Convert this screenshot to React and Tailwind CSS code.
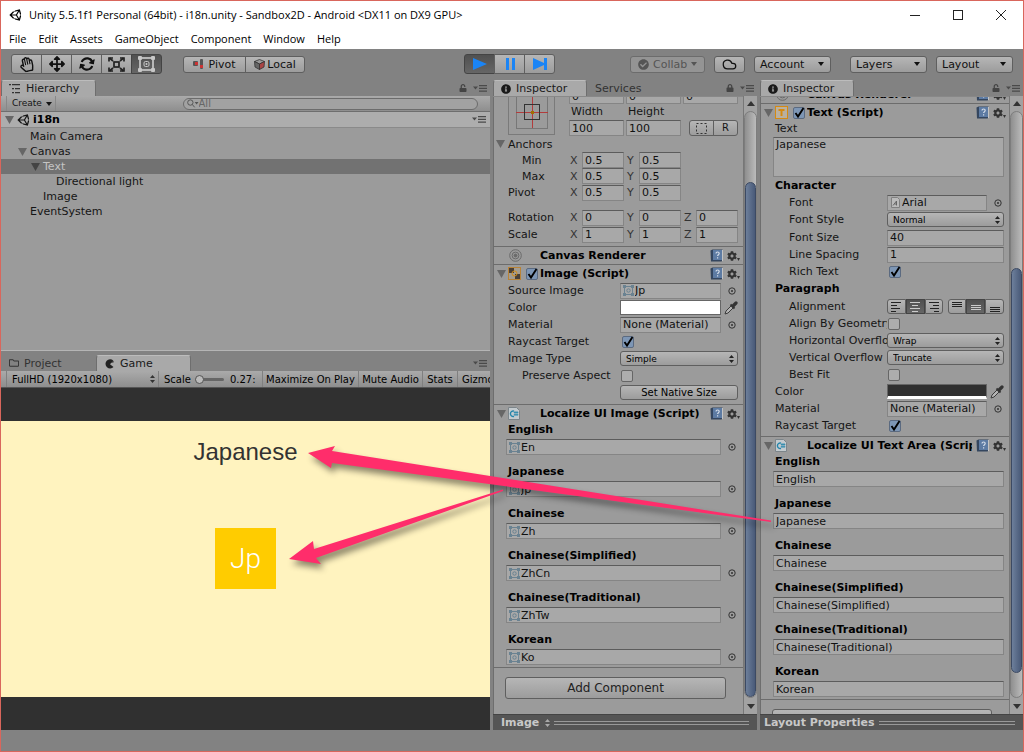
import React, { useId, useState } from 'react';
import {
  FaArrowsAlt,
  FaCheckCircle,
  FaCog,
  FaInfoCircle,
  FaLock,
  FaRegFolder,
  FaRegHandPaper,
  FaSyncAlt,
  FaUnity,
  FaUnlock,
} from 'react-icons/fa';
import { Cloud } from 'lucide-react';

const MENU = ['File', 'Edit', 'Assets', 'GameObject', 'Component', 'Window', 'Help'];

const TREE = [
  { name: 'Main Camera', pad: 'pl-[17px]' },
  { name: 'Canvas', pad: 'pl-[17px]', open: true },
  { name: 'Text', pad: 'pl-[30px]', open: true, selected: true },
  { name: 'Directional light', pad: 'pl-[43px]' },
  { name: 'Image', pad: 'pl-[30px]' },
  { name: 'EventSystem', pad: 'pl-[17px]' },
];

const SPRITES = [
  ['English', 'En'],
  ['Japanese', 'Jp'],
  ['Chainese', 'Zh'],
  ['Chainese(Simplified)', 'ZhCn'],
  ['Chainese(Traditional)', 'ZhTw'],
  ['Korean', 'Ko'],
];

const TEXTS = ['English', 'Japanese', 'Chainese', 'Chainese(Simplified)', 'Chainese(Traditional)', 'Korean'];

const BTN = 'border border-[#5f5f5f] bg-linear-to-b from-[#b6b6b6] to-[#9c9c9c]';
const BTN_ON = 'border border-[#444] bg-linear-to-b from-[#505050] to-[#666]';
const BOX = 'h-4 min-w-0 border border-[#858585] border-t-[#5c5c5c] bg-[#a8a8a8] text-[11px] text-[#111] outline-none';

/* ---------- icons ---------- */

function Foldout({ dark }) {
  return (
    <svg viewBox="0 0 9 8" className={`w-[9px] h-2 shrink-0 ${dark ? 'text-[#444]' : 'text-[#666]'}`}>
      <path d="M0 0h9L4.500 8z" fill="currentColor" />
    </svg>
  );
}

function Caret() {
  return (
    <svg viewBox="0 0 6 4" className="w-[6px] h-1 shrink-0">
      <path d="M0 0h6L3 4z" fill="currentColor" />
    </svg>
  );
}

function UpDown({ className = '' }) {
  return (
    <svg viewBox="0 0 5 8" className={`w-[5px] h-2 shrink-0 ${className}`}>
      <path d="M0 3l2.500-3L5 3zM0 5h5L2.500 8z" fill="currentColor" />
    </svg>
  );
}

function PanelMenu() {
  return (
    <svg viewBox="0 0 14 7" className="w-[14px] h-[7px] shrink-0" fill="#4a4a4a">
      <path d="M0 1.500h5L2.500 4.500zM6 0h8v1.300H6zM6 2.700h8V4H6zM6 5.400h8v1.300H6z" />
    </svg>
  );
}

function ListIcon() {
  return (
    <svg viewBox="0 0 12 10" className="w-3 h-[10px]" fill="#333">
      <path d="M0 0h2v1.300H0zM3 0h8v1.300H3zM3 4h2v1.300H3zM6 4h5v1.300H6zM3 8h2v1.300H3zM6 8h5v1.300H6z" />
    </svg>
  );
}

function ScaleIcon() {
  return (
    <svg viewBox="0 0 17 15" className="w-[17px] h-[15px]" fill="none" stroke="#222" strokeWidth="1.700">
      <rect x="6" y="5" width="5" height="5" />
      <path d="M5 4L1.500 1M12 4l3.500-3M5 11l-3.500 3M12 11l3.500 3" />
      <path d="M1 4.500V1h4M12 1h4v3.500M1 10.500V14h4M12 14h4v-3.500" />
    </svg>
  );
}

function RectIcon() {
  return (
    <svg viewBox="0 0 17 16" className="w-[17px] h-4" fill="none" stroke="#c8c8c8">
      <rect x="2" y="2" width="13" height="12" strokeWidth="1.700" />
      <rect x="6" y="5.500" width="5" height="5" rx="1.500" />
      <g fill="#c8c8c8" stroke="none">
        <circle cx="8.500" cy="8" r="1" />
        <rect width="4" height="4" rx="1" />
        <rect x="13" width="4" height="4" rx="1" />
        <rect y="12" width="4" height="4" rx="1" />
        <rect x="13" y="12" width="4" height="4" rx="1" />
      </g>
    </svg>
  );
}

function PivotIcon() {
  return (
    <svg viewBox="0 0 11 10" className="w-[11px] h-[10px]">
      <rect y="2" width="5" height="5" rx="1" fill="#555" />
      <rect x="2" y="3" width="3" height="3" fill="#c33" />
      <rect x="7" y="0" width="3" height="10" rx="1" fill="#555" />
      <rect x="7" y="6" width="3" height="3" fill="#c33" />
    </svg>
  );
}

function CubeIcon() {
  return (
    <svg viewBox="0 0 11 11" className="w-[11px] h-[11px]" stroke="#333" strokeWidth="0.800">
      <path d="M5.500 0.500L10.500 2.500 5.500 5 0.500 2.500z" fill="#999" />
      <path d="M0.500 2.500L5.500 5v5.500L1 8z" fill="#666" />
      <path d="M10.500 2.500L5.500 5v5.500L10 8z" fill="#a44" />
    </svg>
  );
}

function PacIcon() {
  return (
    <svg viewBox="0 0 10 10" className="w-[10px] h-[10px]">
      <path d="M8.200 1.400A4.600 4.600 0 1 0 8.500 7.900L5 5.200z" fill="#222" />
      <path d="M5 3.600h3.500V1.800z" fill="#222" />
    </svg>
  );
}

function SpriteIcon() {
  return (
    <svg viewBox="0 0 11 11" className="w-[11px] h-[11px] shrink-0" fill="none" stroke="#6a8291">
      <rect x="1.500" y="1.500" width="8" height="8" />
      <circle cx="5.500" cy="5.500" r="1.700" />
      <path d="M0 0h3v3H0zM8 0h3v3H8zM0 8h3v3H0zM8 8h3v3H8z" fill="#6a8291" stroke="none" />
    </svg>
  );
}

function FontIcon() {
  return (
    <svg viewBox="0 0 9 11" className="w-[9px] h-[11px] mx-px shrink-0">
      <path d="M.5.5h6l2 2v8h-8z" fill="#bbb" stroke="#808080" />
      <path d="M2 8.500L5.500 4v4.500M3.500 7h2" fill="none" stroke="#666" />
    </svg>
  );
}

function DropperIcon() {
  return (
    <svg viewBox="0 0 14 14" className="w-[14px] h-[14px]">
      <path d="M1 13l1-3 6-6 2 2-6 6z" fill="#b4b4b4" stroke="#3c3c3c" />
      <path d="M6.500 3.500l4 4" stroke="#333" strokeWidth="1.800" />
      <path d="M9 5l3-3" stroke="#333" strokeWidth="3.200" strokeLinecap="round" />
    </svg>
  );
}

function HelpIcon() {
  return (
    <svg viewBox="0 0 13 13" className="w-[13px] h-[13px]">
      <path d="M.5 1.500L2.500.5h10v11l-1 1H1z" fill="#34465f" />
      <rect x="3" y="1" width="9" height="10" fill="#5d7ba3" />
      <path d="M12.500 1v11" stroke="#c4c4c4" />
      <path d="M6 4.500c0-2 3.200-2 3.200 0 0 1.200-1.600 1.200-1.600 2.600M7.600 8.200v1.300" fill="none" stroke="#d4dce8" strokeWidth="1.200" />
    </svg>
  );
}

function CanvasIcon() {
  return (
    <svg viewBox="0 0 15 13" className="w-[15px] h-[13px]" fill="none" stroke="#6a6a6a">
      <circle cx="7.500" cy="6.500" r="5.800" />
      <circle cx="7.500" cy="6.500" r="3.400" />
      <circle cx="7.500" cy="6.500" r="1.500" fill="#6a6a6a" />
    </svg>
  );
}

function ImageIcon() {
  return (
    <svg viewBox="0 0 13 13" className="w-[13px] h-[13px]">
      <rect width="13" height="13" fill="#a39c90" />
      <path d="M0 0h6v6H0zM7 7h6v6H7z" fill="#4a4038" />
      <rect x=".5" y=".5" width="12" height="12" fill="none" stroke="#b98336" />
      <circle cx="6.500" cy="6.500" r="2.500" fill="none" stroke="#d78d14" />
    </svg>
  );
}

function TextIcon() {
  return (
    <svg viewBox="0 0 13 13" className="w-[13px] h-[13px]">
      <rect x=".5" y=".5" width="12" height="12" fill="#b9b0a0" stroke="#d58a12" />
      <path d="M3.500 4h6M6.500 4v6" stroke="#d58a12" strokeWidth="2" />
    </svg>
  );
}

function ScriptIcon() {
  return (
    <svg viewBox="0 0 12 13" className="w-3 h-[13px]">
      <path d="M.5.5h8l3 3v9H.5z" fill="#c3cace" stroke="#7c858a" />
      <path d="M6 4.200A2.700 2.700 0 1 0 6 9.300" fill="none" stroke="#2385ab" strokeWidth="1.400" />
      <path d="M7 4v5M9 4v5M5.800 5.500h4.500M5.800 7.700h4.500" stroke="#2385ab" strokeWidth=".8" />
    </svg>
  );
}

function AnchorIcon() {
  return (
    <svg viewBox="0 0 32 42" className="w-8 h-[42px]" fill="none">
      <rect x=".5" y="-3" width="31" height="42.500" stroke="#777" />
      <path d="M0 23.500h32M16.500 0v39" stroke="#b23c3c" />
      <rect x="8.500" y="15.500" width="15" height="15" stroke="#333" />
      <rect x="15" y="22" width="3" height="3" fill="#a07000" />
    </svg>
  );
}

function AlignIcon({ d }) {
  return (
    <svg viewBox="0 0 10 10" className="w-[10px] h-[10px]">
      <path d={d} stroke="currentColor" fill="none" />
    </svg>
  );
}

/* ---------- controls ---------- */

function Picker({ name }) {
  return (
    <button aria-label={`Select ${name}`} className="w-[17px] flex justify-end pr-[2px] shrink-0">
      <svg viewBox="0 0 8 8" className="w-2 h-2">
        <circle cx="4" cy="4" r="3.200" fill="none" stroke="#333" />
        <circle cx="4" cy="4" r="1" fill="#333" />
      </svg>
    </button>
  );
}

function ObjectBox({ id, name, value, icon }) {
  return (
    <div className="flex flex-1 items-center min-w-0">
      <div className={`${BOX} flex flex-1 items-center gap-px pl-[2px]`}>
        {icon}
        <input id={id} readOnly defaultValue={value} className="flex-1 min-w-0 h-[14px] bg-transparent outline-none" />
      </div>
      <Picker name={name} />
    </div>
  );
}

function Check({ id, on, label }) {
  const [checked, setChecked] = useState(!!on);
  return (
    <span className="relative w-3 h-3 shrink-0">
      <input
        id={id}
        type="checkbox"
        aria-label={label}
        checked={checked}
        onChange={(e) => setChecked(e.target.checked)}
        className="block appearance-none w-3 h-3 rounded-xs border border-[#666] bg-[#adadad] checked:bg-[#7d96b5] checked:border-[#5b6a80]"
      />
      {checked && (
        <svg viewBox="0 0 12 12" className="absolute inset-0 w-3 h-3 pointer-events-none">
          <path d="M2.500 6l2.500 3.500L10.500 1" fill="none" stroke="#000" strokeWidth="1.900" />
        </svg>
      )}
    </span>
  );
}

function Drop({ id, options }) {
  return (
    <div className="relative flex-1 min-w-0 flex items-center">
      <select id={id} className={`${BTN} appearance-none w-full h-[15px] rounded-[3px] pl-[5px] text-[9px] text-black outline-none`}>
        {options.map((opt) => (
          <option key={opt}>{opt}</option>
        ))}
      </select>
      <UpDown className="absolute right-1 pointer-events-none text-[#222]" />
    </div>
  );
}

function ColorBox({ id, dark }) {
  return (
    <>
      <button
        id={id}
        className={`flex-1 h-[15px] border border-[#666] ${dark ? 'bg-[#303030] border-b-[3px] border-b-white' : 'bg-white'}`}
      />
      <button aria-label="Pick color" className="w-[17px] flex justify-end">
        <DropperIcon />
      </button>
    </>
  );
}

function Row({ label, indent, children }) {
  const id = useId();
  return (
    <div className="h-[17px] flex items-center pl-[15px] pr-[5px]">
      <label htmlFor={id} className={`w-[112px] shrink-0 overflow-hidden whitespace-nowrap ${indent ? 'pl-[14px]' : ''}`}>
        {label}
      </label>
      {children(id)}
    </div>
  );
}

function Vec({ label, indent, values, className = 'h-[17px]' }) {
  return (
    <div className={`flex items-center pl-[15px] pr-[5px] ${className}`}>
      <span className={`w-[61px] shrink-0 ${indent ? 'pl-[14px]' : ''}`}>{label}</span>
      <div className="flex-1 grid grid-cols-3 gap-[2px]">
        {values.map((v, i) => (
          <label key={i} className="flex items-center min-w-0">
            <span className="w-[13px] shrink-0 pl-px text-[#333]">{'XYZ'[i]}</span>
            <input defaultValue={v} className={`${BOX} w-full pl-[2px]`} />
          </label>
        ))}
      </div>
    </div>
  );
}

function Header({ icon, title, fold = true, check }) {
  return (
    <div className="h-[18px] border-t border-[#6c6c6c] flex items-center pl-1 pr-[3px] shrink-0">
      <span className="w-[11px]">{fold && <Foldout />}</span>
      <span className="w-[18px] flex shrink-0">{icon}</span>
      <span className="w-[14px] flex shrink-0">{check && <Check on label={`${title} enabled`} />}</span>
      <h3 className="flex-1 min-w-0 overflow-hidden whitespace-nowrap font-bold text-black mr-1">{title}</h3>
      <button aria-label="Help" className="mr-1">
        <HelpIcon />
      </button>
      <button aria-label="Component menu" className="flex items-end text-[#333]">
        <FaCog size={10} />
        <svg viewBox="0 0 3 3" className="w-[3px] h-[3px]">
          <path d="M0 0h3L1.500 3z" fill="currentColor" />
        </svg>
      </button>
    </div>
  );
}

function Entry({ label, value, sprite }) {
  const id = useId();
  return (
    <div className="h-[42px] pl-[13px] pr-[5px]">
      <label htmlFor={id} className="block h-4 leading-4 pl-[2px] font-bold text-black">
        {label}
      </label>
      <div className="h-[17px] flex items-end">
        {sprite ? (
          <ObjectBox id={id} name={label} value={value} icon={<SpriteIcon />} />
        ) : (
          <input id={id} defaultValue={value} className={`${BOX} w-full pl-[2px]`} />
        )}
      </div>
    </div>
  );
}

function Tab({ icon, children, active, className = '' }) {
  return (
    <button
      role="tab"
      aria-selected={!!active}
      className={`h-4 flex items-center gap-[5px] text-[11px] text-[#1a1a1a] whitespace-nowrap ${
        active ? 'bg-[#a9a9a9] border border-b-0 border-[#6e6e6e] border-t-[#bcbcbc] rounded-t-[3px]' : 'text-[#333]'
      } ${className}`}
    >
      {icon}
      {children}
    </button>
  );
}

function Scrollbar({ thumb }) {
  return (
    <div className="w-[14px] shrink-0 flex flex-col items-center bg-[#a2a2a2] border-l border-[#777] text-[#333]">
      <div className="h-[15px] grid place-items-center">
        <svg viewBox="0 0 8 5" className="w-2 h-[5px]">
          <path d="M0 5h8L4 0z" fill="currentColor" />
        </svg>
      </div>
      <div className="flex-1 w-full rounded-full border border-[#7d7d7d] bg-linear-to-r from-[#8f8f8f] to-[#bbb] flex flex-col overflow-hidden">
        {thumb}
      </div>
      <div className="h-4 grid place-items-center">
        <svg viewBox="0 0 8 5" className="w-2 h-[5px]">
          <path d="M0 0h8L4 5z" fill="currentColor" />
        </svg>
      </div>
    </div>
  );
}

function Inspector({ width, services, locked, footer, footerMenu, thumb, children }) {
  return (
    <section className={`${width} shrink-0 flex flex-col min-h-0`}>
      <div className="h-4 flex items-center pr-[3px]">
        <Tab active icon={<FaInfoCircle size={10} />} className="w-[94px] pl-[7px]">
          Inspector
        </Tab>
        {services && <Tab className="pl-2">Services</Tab>}
        <span className="ml-auto mr-[6px] text-[#444]">{locked ? <FaLock size={8} /> : <FaUnlock size={8} />}</span>
        <PanelMenu />
      </div>
      <div className="flex-1 min-h-0 flex bg-[#9b9b9b] border-l border-[#6e6e6e]">
        <div className="flex-1 min-w-0 overflow-hidden border-t border-[#888] -ml-px">{children}</div>
        <Scrollbar thumb={thumb} />
      </div>
      <div className="h-4 shrink-0 flex items-center bg-[#555] border-t border-[#444] pr-2">
        <span className={`flex items-center gap-[6px] pr-1 font-bold text-[#c8c8c8] whitespace-nowrap ${footerMenu ? 'pl-2' : 'pl-1'}`}>
          {footer}
          {footerMenu && <UpDown className="text-[#aaa]" />}
        </span>
        <span className="flex-1 h-1 border-y border-[#999]" />
      </div>
    </section>
  );
}

function WindowButtons() {
  return (
    <div className="ml-auto flex items-center gap-[33px] pr-[17px] text-[#222]">
      <button aria-label="Minimize">
        <svg viewBox="0 0 10 10" className="w-[10px] h-[10px]">
          <path d="M0 5.500h10" stroke="currentColor" />
        </svg>
      </button>
      <button aria-label="Maximize">
        <svg viewBox="0 0 10 10" className="w-[10px] h-[10px]">
          <rect x=".5" y=".5" width="9" height="9" fill="none" stroke="currentColor" />
        </svg>
      </button>
      <button aria-label="Close">
        <svg viewBox="0 0 10 10" className="w-[10px] h-[10px]">
          <path d="M0 0l10 10M10 0L0 10" stroke="currentColor" />
        </svg>
      </button>
    </div>
  );
}

function ToolBar() {
  const tools = [
    ['Hand', <FaRegHandPaper size={15} className="-rotate-12" />],
    ['Move', <FaArrowsAlt size={16} />],
    ['Rotate', <FaSyncAlt size={14} className="rotate-12" />],
    ['Scale', <ScaleIcon />],
    ['Rect', <RectIcon />],
  ];
  const play = [
    ['Play', 'M0 1l14 6L0 13z'],
    ['Pause', 'M3 1h3v12H3zM9 1h3v12H9z'],
    ['Step', 'M0 1l11 5V1h3v12h-3V8L0 13z'],
  ];
  return (
    <div className="h-[31px] shrink-0 grid grid-cols-[1fr_auto_1fr] items-center px-[10px] pb-px text-[#111]">
      <div className="flex items-center">
        <div className="flex">
          {tools.map(([name, icon], i) => (
            <button
              key={name}
              aria-label={name}
              className={`w-[31px] h-5 -mr-px grid place-items-center first:rounded-l-[3px] last:rounded-r-[3px] ${i === 4 ? BTN_ON : BTN}`}
            >
              {icon}
            </button>
          ))}
        </div>
        <button className={`${BTN} ml-[22px] w-[63px] h-[17px] rounded-l-[3px] flex items-center justify-center gap-1 text-[11px]`}>
          <PivotIcon />
          Pivot
        </button>
        <button className={`${BTN} -ml-px w-[60px] h-[17px] rounded-r-[3px] flex items-center justify-center gap-[2px] text-[11px]`}>
          <CubeIcon />
          Local
        </button>
      </div>
      <div className="flex mr-[6px]">
        {play.map(([name, d], i) => (
          <button
            key={name}
            aria-label={name}
            className={`w-[31px] h-5 -mr-px grid place-items-center first:rounded-l-[3px] last:rounded-r-[3px] ${i === 0 ? BTN_ON : BTN}`}
          >
            <svg viewBox="0 0 14 14" className="w-[14px] h-[14px]">
              <path d={d} fill="#1a84f5" />
            </svg>
          </button>
        ))}
      </div>
      <div className="flex items-center justify-end text-[11px]">
        <button className="w-[75px] h-[17px] rounded-[3px] border border-[#6c6c6c] bg-[#949494] text-[#555] flex items-center gap-1 pl-[7px] mr-[9px]">
          <FaCheckCircle size={11} />
          Collab
          <Caret />
        </button>
        <button aria-label="Cloud services" className={`${BTN} w-[31px] h-[17px] rounded-[3px] grid place-items-center mr-[9px]`}>
          <Cloud size={15} strokeWidth={2} />
        </button>
        {['Account', 'Layers', 'Layout'].map((name) => (
          <button
            key={name}
            className={`${BTN} w-[77px] h-[17px] rounded-[3px] flex items-center justify-between pl-[5px] pr-[6px] ${
              name === 'Account' ? 'mr-[19px]' : name === 'Layers' ? 'mr-[9px]' : ''
            }`}
          >
            {name}
            <Caret />
          </button>
        ))}
      </div>
    </div>
  );
}

function Hierarchy() {
  return (
    <section className="h-[271px] shrink-0 flex flex-col">
      <div className="h-4 flex items-center pr-[3px]">
        <Tab active icon={<ListIcon />} className="w-[95px] pl-[7px] gap-[2px]">
          Hierarchy
        </Tab>
        <span className="ml-auto mr-[6px] text-[#444]">
          <FaUnlock size={8} />
        </span>
        <PanelMenu />
      </div>
      <div className="h-4 flex items-center bg-linear-to-b from-[#aaa] to-[#8e8e8e] border-b border-[#6e6e6e] text-[9px] pl-[5px] pr-3">
        <button className="h-full w-[50px] flex items-center gap-1 pl-[5px] border-x border-[#888]">
          Create
          <Caret />
        </button>
        <label className="ml-auto flex-[0_1_295px] h-3 rounded-full border border-[#6c6c6c] bg-[#a2a2a2] flex items-center pl-[3px] text-[#555]">
          <svg viewBox="0 0 12 9" className="w-3 h-[9px]" fill="none" stroke="currentColor">
            <circle cx="3.500" cy="3.500" r="2.800" />
            <path d="M5.500 5.500L8 8.500" />
            <path d="M8 3h4l-2 2.500z" fill="currentColor" stroke="none" />
          </svg>
          <input aria-label="Search" placeholder="All" className="w-full bg-transparent outline-none text-[10px] placeholder:text-[#666]" />
        </label>
      </div>
      <div className="h-4 flex items-center bg-[#adadad] border-b border-[#8a8a8a] pl-1 pr-1">
        <Foldout />
        <FaUnity size={14} className="ml-[3px] mr-[2px]" />
        <span className="flex-1 font-bold text-black">i18n</span>
        <PanelMenu />
      </div>
      <ul className="flex-1 bg-[#9b9b9b] border-b border-[#b5b5b5] pt-px">
        {TREE.map((node) => (
          <li
            key={node.name}
            className={`h-[15px] flex items-center ${node.pad} ${node.selected ? 'bg-[#727272] text-[#c4c4c4]' : ''}`}
          >
            <span className="w-3">{node.open && <Foldout dark={node.selected} />}</span>
            {node.name}
          </li>
        ))}
      </ul>
    </section>
  );
}

function GameView() {
  return (
    <section className="mt-1 flex-1 min-h-0 flex flex-col">
      <div className="h-4 flex items-center pr-[3px]">
        <Tab icon={<FaRegFolder size={10} />} className="w-[95px] pl-2">
          Project
        </Tab>
        <Tab active icon={<PacIcon />} className="w-[95px] pl-2">
          Game
        </Tab>
        <span className="ml-auto">
          <PanelMenu />
        </span>
      </div>
      <div className="h-[17px] flex shrink-0 items-stretch overflow-hidden bg-linear-to-b from-[#aaa] to-[#8e8e8e] border-b border-[#555] pl-[5px] text-[10px] whitespace-nowrap text-black">
        <div className="relative w-[153px] shrink-0 flex items-center border-x border-[#808080]">
          <select aria-label="Resolution" className="appearance-none w-full pl-[5px] bg-transparent outline-none">
            <option>FullHD (1920x1080)</option>
          </select>
          <UpDown className="absolute right-[3px] pointer-events-none text-[#333]" />
        </div>
        <label className="w-[103px] shrink-0 flex items-center gap-1 pl-[5px]">
          Scale
          <input
            type="range"
            defaultValue="0"
            className="appearance-none w-[29px] h-[3px] rounded-full bg-[#666] [&::-webkit-slider-thumb]:appearance-none [&::-webkit-slider-thumb]:w-[9px] [&::-webkit-slider-thumb]:h-[9px] [&::-webkit-slider-thumb]:rounded-full [&::-webkit-slider-thumb]:bg-[#bbb] [&::-webkit-slider-thumb]:border [&::-webkit-slider-thumb]:border-[#555]"
          />
          <span className="pl-[2px]">0.27:</span>
        </label>
        <button className="w-[96px] shrink-0 border-l border-[#808080]">Maximize On Play</button>
        <button className="w-16 shrink-0 border-l border-[#808080]">Mute Audio</button>
        <button className="w-[35px] shrink-0 border-l border-[#808080]">Stats</button>
        <button className="flex-1 text-left pl-1 border-l border-[#808080] overflow-hidden">Gizmos</button>
      </div>
      <div className="flex-1 min-h-0 flex flex-col justify-center bg-[#303030]">
        <div className="h-[276px] bg-[#fff3bf] flex flex-col items-center pt-[15px]">
          <p className="text-2xl leading-8 text-[#323232] font-['Liberation_Sans',sans-serif]">Japanese</p>
          <div className="mt-[60px] w-[61px] h-[61px] bg-[#ffcc00] grid place-items-center text-[28px] font-light text-white font-['Roboto',sans-serif]">
            Jp
          </div>
        </div>
      </div>
    </section>
  );
}

function ImageInspector() {
  return (
    <div className="-mt-[9px]">
      <div className="flex pl-[15px] pr-[5px]">
        <div className="w-[61px] shrink-0">
          <div className="w-[47px] h-[47px] border border-[#7a7a7a] flex justify-center">
            <AnchorIcon />
          </div>
        </div>
        <div className="flex-1 grid grid-cols-3 gap-x-[2px]">
          {['Pos X', 'Pos Y', 'Pos Z'].map((axis) => (
            <input key={axis} aria-label={axis} defaultValue="0" className={`${BOX} w-full pl-[2px]`} />
          ))}
          <label htmlFor="rect-width" className="leading-4 pl-[2px]">Width</label>
          <label htmlFor="rect-height" className="leading-4 pl-[2px]">Height</label>
          <span />
          <input id="rect-width" defaultValue="100" className={`${BOX} w-full pl-[2px]`} />
          <input id="rect-height" defaultValue="100" className={`${BOX} w-full pl-[2px]`} />
          <div className="flex justify-end">
            <button aria-label="Blueprint mode" className={`${BTN} w-[25px] h-4 rounded-l-[3px] grid place-items-center`}>
              <svg viewBox="0 0 11 11" className="w-[11px] h-[11px]">
                <rect x=".5" y=".5" width="10" height="10" fill="none" stroke="#333" strokeDasharray="2 2" />
              </svg>
            </button>
            <button className={`${BTN} -ml-px w-[25px] h-4 rounded-r-[3px] text-[10px] leading-3`}>R</button>
          </div>
        </div>
      </div>
      <div className="h-4 flex items-center gap-[3px] pl-[3px]">
        <Foldout />
        Anchors
      </div>
      <Vec label="Min" indent values={['0.5', '0.5']} className="h-4" />
      <Vec label="Max" indent values={['0.5', '0.5']} className="h-4" />
      <Vec label="Pivot" values={['0.5', '0.5']} />
      <div className="h-2" />
      <Vec label="Rotation" values={['0', '0', '0']} />
      <Vec label="Scale" values={['1', '1', '1']} />
      <div className="h-[3px]" />
      <Header icon={<CanvasIcon />} title="Canvas Renderer" fold={false} />
      <Header icon={<ImageIcon />} title="Image (Script)" check />
      <Row label="Source Image">{(id) => <ObjectBox id={id} name="Source Image" value="Jp" icon={<SpriteIcon />} />}</Row>
      <Row label="Color">{(id) => <ColorBox id={id} />}</Row>
      <Row label="Material">{(id) => <ObjectBox id={id} name="Material" value="None (Material)" />}</Row>
      <Row label="Raycast Target">{(id) => <span className="pl-[2px] flex"><Check id={id} on /></span>}</Row>
      <Row label="Image Type">{(id) => <Drop id={id} options={['Simple', 'Sliced', 'Tiled', 'Filled']} />}</Row>
      <Row label="Preserve Aspect" indent>{(id) => <span className="pl-px flex"><Check id={id} /></span>}</Row>
      <div className="h-[17px] flex items-center pl-[127px] pr-[5px]">
        <button className={`${BTN} w-full h-[15px] rounded-[3px] text-[10px] leading-3 text-black`}>Set Native Size</button>
      </div>
      <div className="h-[3px]" />
      <Header icon={<ScriptIcon />} title="Localize UI Image (Script)" />
      {SPRITES.map(([label, value]) => (
        <Entry key={label} label={label} value={value} sprite />
      ))}
      <div className="-mt-[7px] border-t border-[#6c6c6c] pt-[9px] pl-3 pr-[17px]">
        <button className={`${BTN} w-full h-[22px] rounded-[3px] text-xs text-[#222]`}>Add Component</button>
      </div>
    </div>
  );
}

const H_ALIGN = [
  ['Left', 'M0 .5h10M0 3.500h6M0 6.500h9M0 9.500h5'],
  ['Center', 'M0 .5h10M2 3.500h6M0 6.500h10M2 9.500h6'],
  ['Right', 'M0 .5h10M4 3.500h6M1 6.500h9M5 9.500h5'],
];
const V_ALIGN = [
  ['Top', 'M0 .5h10M0 2.500h10M0 4.500h10'],
  ['Middle', 'M0 3.500h10M0 5.500h10M0 7.500h10'],
  ['Bottom', 'M0 5.500h10M0 7.500h10M0 9.500h10'],
];

function AlignGroup({ items }) {
  return (
    <div className="flex flex-1">
      {items.map(([name, d], i) => (
        <button
          key={name}
          aria-label={`Align ${name}`}
          className={`flex-1 h-[15px] grid place-items-center first:rounded-l-[3px] last:rounded-r-[3px] ${
            i === 1 ? `${BTN_ON} text-[#ccc]` : `${BTN} text-[#222]`
          }`}
        >
          <AlignIcon d={d} />
        </button>
      ))}
    </div>
  );
}

function TextInspector() {
  return (
    <div className="-mt-3">
      <Header icon={<CanvasIcon />} title="Canvas Renderer" fold={false} />
      <Header icon={<TextIcon />} title="Text (Script)" check />
      <div className="pl-[13px] pr-[5px]">
        <label htmlFor="text-value" className="block h-4 leading-4 pl-[2px]">Text</label>
        <textarea
          id="text-value"
          defaultValue="Japanese"
          className="block w-full h-10 resize-none border border-[#858585] border-t-[#5c5c5c] bg-[#a8a8a8] pl-[2px] text-[11px] leading-[14px] outline-none"
        />
      </div>
      <h4 className="h-[17px] leading-[17px] pl-[15px] font-bold text-black">Character</h4>
      <Row label="Font" indent>{(id) => <ObjectBox id={id} name="Font" value="Arial" icon={<FontIcon />} />}</Row>
      <Row label="Font Style" indent>{(id) => <Drop id={id} options={['Normal', 'Bold', 'Italic']} />}</Row>
      <div className="h-px" />
      <Row label="Font Size" indent>{(id) => <input id={id} defaultValue="40" className={`${BOX} flex-1 pl-[2px]`} />}</Row>
      <Row label="Line Spacing" indent>{(id) => <input id={id} defaultValue="1" className={`${BOX} flex-1 pl-[2px]`} />}</Row>
      <Row label="Rich Text" indent>{(id) => <span className="pl-[2px] flex"><Check id={id} on /></span>}</Row>
      <h4 className="h-[17px] leading-[17px] pl-[15px] font-bold text-black">Paragraph</h4>
      <div className="h-px" />
      <div className="h-[17px] flex items-center pl-[15px] pr-[5px]">
        <span className="w-[112px] shrink-0 pl-[14px]">Alignment</span>
        <div className="flex flex-1 gap-1">
          <AlignGroup items={H_ALIGN} />
          <AlignGroup items={V_ALIGN} />
        </div>
      </div>
      <Row label="Align By Geometry" indent>{(id) => <span className="pl-px flex"><Check id={id} /></span>}</Row>
      <Row label="Horizontal Overflow" indent>{(id) => <Drop id={id} options={['Wrap', 'Overflow']} />}</Row>
      <Row label="Vertical Overflow" indent>{(id) => <Drop id={id} options={['Truncate', 'Overflow']} />}</Row>
      <Row label="Best Fit" indent>{(id) => <span className="pl-px flex"><Check id={id} /></span>}</Row>
      <Row label="Color">{(id) => <ColorBox id={id} dark />}</Row>
      <Row label="Material">{(id) => <ObjectBox id={id} name="Material" value="None (Material)" />}</Row>
      <Row label="Raycast Target">{(id) => <span className="pl-[2px] flex"><Check id={id} on /></span>}</Row>
      <div className="h-[2px]" />
      <Header icon={<ScriptIcon />} title="Localize UI Text Area (Script)" />
      {TEXTS.map((text) => (
        <Entry key={text} label={text} value={text} />
      ))}
      <div className="-mt-[7px] border-t border-[#6c6c6c] pt-[9px] pl-3 pr-[17px]">
        <button className={`${BTN} w-full h-[22px] rounded-[3px] text-xs text-[#222]`}>Add Component</button>
      </div>
    </div>
  );
}

export default function App() {
  return (
    <div className="relative h-screen flex flex-col overflow-hidden bg-[#828282] border border-[#d9665c] text-[11px] leading-[15px] text-[#151515] font-['DejaVu_Sans',Verdana,sans-serif]">
      <header className="shrink-0 h-12 bg-white text-black font-['Open_Sans',sans-serif]">
        <div className="h-[27px] flex items-center pl-2">
          <FaUnity size={14} />
          <h1 className="pl-[6px]">Unity 5.5.1f1 Personal (64bit) - i18n.unity - Sandbox2D - Android &lt;DX11 on DX9 GPU&gt;</h1>
          <WindowButtons />
        </div>
        <nav className="h-[21px] flex items-center gap-3 pl-2">
          {MENU.map((item) => (
            <button key={item}>{item}</button>
          ))}
        </nav>
      </header>
      <ToolBar />
      <main className="flex-1 min-h-0 flex gap-[3px] pb-[21px]">
        <div className="flex-1 min-w-0 flex flex-col">
          <Hierarchy />
          <GameView />
        </div>
        <Inspector
          width="w-[264px]"
          services
          locked
          footer="Image"
          footerMenu
          thumb={<div className="mt-[70px] flex-1 rounded-full border border-[#3c4a63] bg-linear-to-r from-[#6d7f9b] to-[#495a78]" />}
        >
          <ImageInspector />
        </Inspector>
        <Inspector
          width="w-[263px]"
          footer="Layout Properties"
          thumb={<div className="mt-[156px] mb-6 flex-1 rounded-full border border-[#3c4a63] bg-linear-to-r from-[#6d7f9b] to-[#495a78]" />}
        >
          <TextInspector />
        </Inspector>
      </main>

      {/* callouts from the inspector fields to the game view */}
      <svg className="absolute -left-px -top-px w-[1024px] h-[752px] pointer-events-none drop-shadow-[3px_5px_3px_rgba(0,0,0,0.45)]" fill="#ff2d6b">
        <path d="M308 453L335 446 332 451 771 520.500V522L332 463 331 468z" />
        <path d="M289 559L313 541 314 549 503 489.500V491L316 558 321 564z" />
      </svg>
    </div>
  );
}
